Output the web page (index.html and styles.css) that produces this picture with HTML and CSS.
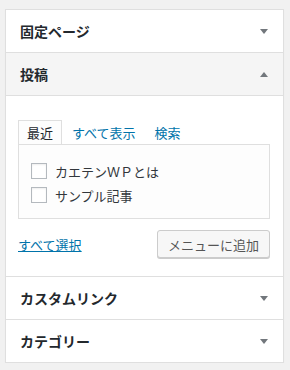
FILE: index.html
```html
<!DOCTYPE html>
<html lang="ja">
<head>
<meta charset="utf-8">
<link rel="stylesheet" href="styles.css">
</head>
<body>

<div id="menu_boxes">

<div class="box">
    <div class="box_title">
        <span>固定ページ</span>
        <span class="arrow down"></span>
    </div>
</div>

<div class="box open">
    <div class="box_title">
        <span>投稿</span>
        <span class="arrow up"></span>
    </div>
    <div class="box_content">
        <ul class="tabs">
            <li class="tab active">最近</li>
            <li class="tab"><a href="#">すべて表示</a></li>
            <li class="tab"><a href="#">検索</a></li>
        </ul>
        <div class="tab_panel">
            <label class="item"><span class="check"></span>カエテンＷＰとは</label>
            <label class="item"><span class="check"></span>サンプル記事</label>
        </div>
        <div class="actions">
            <a href="#" class="select_all">すべて選択</a>
            <button class="add_button">メニューに追加</button>
        </div>
    </div>
</div>

<div class="box">
    <div class="box_title">
        <span>カスタムリンク</span>
        <span class="arrow down"></span>
    </div>
</div>

<div class="box">
    <div class="box_title">
        <span>カテゴリー</span>
        <span class="arrow down"></span>
    </div>
</div>

</div>

</body>
</html>
```

FILE: styles.css
```css
body
{
margin: 0;
background: #f1f1f1;
font-family: "Noto Sans CJK JP", "Noto Sans", sans-serif;
color: #23282d;
}

#menu_boxes
{
margin: 9px 0 0 5px;
width: 277px;
border: 1px solid #dfdfdf;
background: #fff;
box-shadow: 0 1px 1px rgba(0, 0, 0, 0.04);
}

.box
{
border-bottom: 1px solid #dfdfdf;
}

.box:last-child
{
border-bottom: none;
}

.box_title
{
height: 42px;
display: flex;
align-items: center;
justify-content: space-between;
padding: 0 15px 0 14px;
font-size: 14px;
font-weight: 600;
line-height: 20px;
}

.open .box_title
{
background: #f5f5f5;
border-bottom: 1px solid #dfdfdf;
}

.arrow
{
width: 0;
height: 0;
border-left: 4px solid transparent;
border-right: 4px solid transparent;
}

.arrow.down
{
border-top: 5px solid #72777c;
}

.arrow.up
{
border-bottom: 5px solid #72777c;
}

.box_content
{
padding: 24px 13px 18px 12px;
}

.tabs
{
list-style: none;
margin: 0;
padding: 0;
display: flex;
font-size: 13px;
line-height: 24px;
height: 24px;
}

.tab
{
padding: 0 8px;
margin-right: 1px;
border: 1px solid transparent;
border-bottom: none;
}

.tab a
{
color: #0073aa;
text-decoration: none;
}

.tab.active
{
border-color: #dfdfdf;
background: #fdfdfd;
color: #23282d;
position: relative;
z-index: 1;
}

.tab_panel
{
border: 1px solid #dfdfdf;
background: #fdfdfd;
padding: 14px 12px 11px 12px;
}

.item
{
display: flex;
align-items: center;
height: 24px;
font-size: 13px;
color: #32373c;
}

.check
{
width: 14px;
height: 14px;
border: 1px solid #b4b9be;
background: #fff;
margin-right: 8px;
box-shadow: inset 0 1px 2px rgba(0, 0, 0, 0.07);
}

.actions
{
display: flex;
justify-content: space-between;
align-items: center;
margin-top: 11px;
}

.select_all
{
font-size: 13px;
color: #0073aa;
text-decoration: underline;
}

.add_button
{
height: 28px;
padding: 0 10px;
font-family: "Noto Sans CJK JP", "Noto Sans", sans-serif;
font-size: 13px;
color: #555;
background: #f7f7f7;
border: 1px solid #ccc;
border-radius: 3px;
box-shadow: 0 1px 0 #ccc;
}
```
